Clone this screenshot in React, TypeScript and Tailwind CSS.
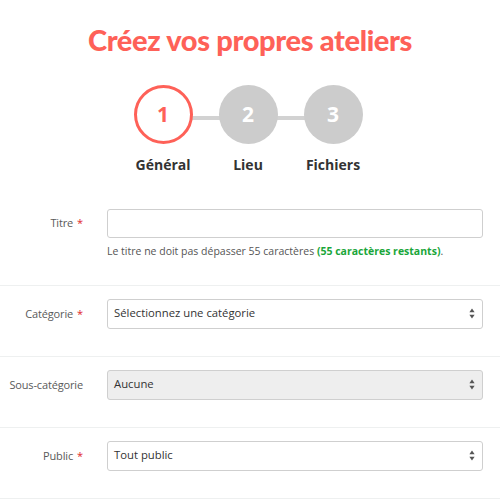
const CORAL = "#fe6158"

type Step = { n: number; label: string; active?: boolean }

const steps: Step[] = [
  { n: 1, label: "Général", active: true },
  { n: 2, label: "Lieu" },
  { n: 3, label: "Fichiers" },
]

function Arrows() {
  return (
    <svg width="6" height="11" viewBox="0 0 6 11" className="shrink-0">
      <path d="M3 0.5 L5.6 4.2 H0.4 Z" fill="#555" />
      <path d="M3 10.5 L5.6 6.8 H0.4 Z" fill="#555" />
    </svg>
  )
}

function Row({ label, required, children }: { label: string; required?: boolean; children: React.ReactNode }) {
  return (
    <div className="flex border-b border-[#eef0f0] pt-[13px] pb-[27px]">
      <div className="flex h-[30px] w-[83px] shrink-0 items-center justify-end text-[11px] tracking-[-0.15px] text-[#5a5a5a]">
        {label}
        {required && <span className="ml-[4px] text-[#e0252b]">*</span>}
      </div>
      <div className="ml-[24px] mr-[17px] flex-1">{children}</div>
    </div>
  )
}

function Select({ value, disabled }: { value: string; disabled?: boolean }) {
  return (
    <div
      className={
        "flex h-[30px] items-center justify-between rounded-[3px] border border-[#cfcfcf] pl-[6px] pr-[7px] text-[11.3px] text-[#333] " +
        (disabled ? "bg-[#eeeeee]" : "bg-white")
      }
    >
      <span>{value}</span>
      <Arrows />
    </div>
  )
}

export default function App() {
  return (
    <div className="h-[500px] w-[500px] overflow-hidden bg-white font-['Open_Sans',sans-serif]">
      <h1
        className="pt-[22px] text-center font-['Lato',sans-serif] text-[29px] font-black leading-[36px] tracking-[-0.35px]"
        style={{ color: CORAL }}
      >
        Créez vos propres ateliers
      </h1>

      <div className="relative mx-auto mt-[27px] h-[93px] w-[240px] -translate-x-[2px]">
        <div className="absolute left-[30px] right-[30px] top-[31px] h-[4px] bg-[#d2d2d2]" />
        <div className="relative flex justify-between">
          {steps.map((s) => (
            <div key={s.n} className="flex w-[70px] flex-col items-center">
              <div
                className={
                  "flex h-[59px] w-[59px] items-center justify-center rounded-full text-[21px] font-bold " +
                  (s.active ? "border-[3px] border-[#fe6158] bg-white text-[#fe6158]" : "bg-[#cccccc] text-white")
                }
              >
                {s.n}
              </div>
              <div className="mt-[10px] text-[14px] font-bold text-[#333]">{s.label}</div>
            </div>
          ))}
        </div>
      </div>

      <div className="mt-[17px]">
        <div className="flex border-b border-[#eef0f0] pt-[14px] pb-[25px]">
          <div className="flex h-[29px] w-[83px] shrink-0 items-center justify-end text-[11px] tracking-[-0.15px] text-[#5a5a5a]">
            Titre<span className="ml-[4px] text-[#e0252b]">*</span>
          </div>
          <div className="ml-[24px] mr-[17px] flex-1">
            <div className="h-[29px] rounded-[3px] border border-[#cfcfcf] bg-white" />
            <p className="mt-[6px] text-[10.5px] text-[#555]">
              Le titre ne doit pas dépasser 55 caractères{" "}
              <span className="font-bold text-[#1aa63a]">(55 caractères restants)</span>.
            </p>
          </div>
        </div>

        <Row label="Catégorie" required>
          <Select value="Sélectionnez une catégorie" />
        </Row>
        <Row label="Sous-catégorie">
          <Select value="Aucune" disabled />
        </Row>
        <Row label="Public" required>
          <Select value="Tout public" />
        </Row>
      </div>
    </div>
  )
}
